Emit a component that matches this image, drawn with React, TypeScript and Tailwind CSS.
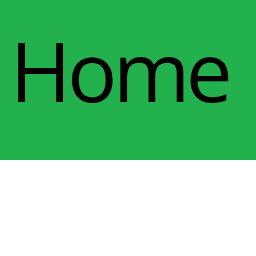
export default function App() {
  return (
    <div className="w-[256px] h-[256px] bg-white">
      <div className="h-[160px] bg-[#22b14c] pl-[10px] pt-[28px]">
        <div className="text-[83px] leading-none text-black tracking-[-4px]" style={{ fontFamily: '"Open Sans", sans-serif' }}>Home</div>
      </div>
    </div>
  );
}
